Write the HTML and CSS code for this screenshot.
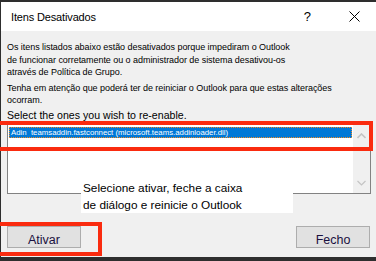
FILE: index.html
```html
<!DOCTYPE html>
<html>
<head>
<meta charset="utf-8">
<link rel="stylesheet" href="styles.css">
</head>
<body>
<div class="window">
  <div class="titlebar">
    <span class="title">Itens Desativados</span>
    <span class="help">?</span>
    <svg class="close" width="11" height="11" viewBox="0 0 11 11"><path d="M0.5 0.5 L10.5 10.5 M10.5 0.5 L0.5 10.5" stroke="#000" stroke-width="1" fill="none"/></svg>
  </div>
  <div class="content">
    <p class="desc">Os itens listados abaixo estão desativados porque impediram o Outlook<br>de funcionar corretamente ou o administrador de sistema desativou-os<br>através de Política de Grupo.</p>
    <p class="desc note">Tenha em atenção que poderá ter de reiniciar o Outlook para que estas alterações<br>ocorram.</p>
    <p class="select">Select the ones you wish to re-enable.</p>
    <div class="listbox">
      <div class="items">
        <div class="item selected">Adin&nbsp; teamsaddin.fastconnect (microsoft.teams.addinloader.dll)</div>
      </div>
      <div class="scrollbar">
        <svg width="9" height="6" viewBox="0 0 9 6"><path d="M0.5 5 L4.5 1 L8.5 5" stroke="#c4c4c4" stroke-width="1.6" fill="none"/></svg>
        <svg width="9" height="6" viewBox="0 0 9 6"><path d="M0.5 1 L4.5 5 L8.5 1" stroke="#c4c4c4" stroke-width="1.2" fill="none"/></svg>
      </div>
    </div>
    <div class="buttons">
      <button class="btn">Ativar</button>
      <button class="btn">Fecho</button>
    </div>
    <div class="callout">Selecione ativar, feche a caixa<br>de diálogo e reinicie o Outlook</div>
    <div class="highlight hl-list"></div>
    <div class="highlight hl-button"></div>
  </div>
</div>
</body>
</html>
```
FILE: styles.css
```css
html, body {
  margin: 0;
  padding: 0;
}
body {
  background: #2e2e2e;
  width: 376px;
  height: 261px;
  overflow: hidden;
}
.window {
  margin: 2px 0 0 1px;
  height: 255px;
  background: #f0f0f0;
  display: flex;
  flex-direction: column;
}
.titlebar {
  height: 29px;
  background: #ffffff;
  display: flex;
  align-items: center;
  font-family: "Liberation Sans", Arial, sans-serif;
  font-size: 11px;
  color: #000;
}
.title {
  margin-left: 10px;
  flex: 1;
  letter-spacing: -0.15px;
}
.help {
  font-size: 13px;
  margin-right: 38px;
}
.close {
  margin-right: 16px;
}
.content {
  position: relative;
  flex: 1;
  padding: 10px 0 0 6px;
  font-family: "Liberation Sans", Arial, sans-serif;
}
.desc {
  margin: 0;
  font-size: 9px;
  line-height: 12.5px;
  color: #000;
  letter-spacing: -0.05px;
}
.note {
  margin-top: 3px;
}
.select {
  margin: 1px 0 0;
  font-size: 10.6px;
  line-height: 14px;
  color: #000;
}
.listbox {
  margin-top: 2px;
  width: 362px;
  height: 68px;
  border: 1px solid #828282;
  background: #fff;
  display: flex;
}
.items {
  flex: 1;
  padding: 2px 1px 0 1px;
}
.item {
  font-size: 7.8px;
  line-height: 11px;
  padding-left: 2px;
  height: 11px;
  white-space: nowrap;
  overflow: hidden;
}
.selected {
  background: #0078d7;
  color: #fff;
  outline: 1px dotted #f08a24;
  outline-offset: -1px;
}
.scrollbar {
  width: 17px;
  background: #f0f0f0;
  display: flex;
  flex-direction: column;
  align-items: center;
  justify-content: space-between;
  padding: 8px 0 7px;
  box-sizing: border-box;
}
.buttons {
  margin-top: 32px;
  display: flex;
  justify-content: space-between;
  width: 363px;
}
.btn {
  width: 74px;
  height: 22px;
  background: #e1e1e1;
  border: 1px solid #adadad;
  font-family: "Liberation Sans", Arial, sans-serif;
  font-size: 12.5px;
  color: #1a1040;
  padding: 6px 0 0;
  margin: 0;
  line-height: 14px;
}
.callout {
  position: absolute;
  left: 80px;
  top: 149px;
  width: 210px;
  height: 33px;
  background: #fff;
  padding: 0 0 0 2px;
  font-size: 11.8px;
  line-height: 16.5px;
  color: #000;
}
.highlight {
  position: absolute;
  border: 4px solid #fa2b0f;
}
.hl-list {
  left: -5px;
  top: 90px;
  width: 369px;
  height: 22px;
}
.hl-button {
  left: -10px;
  top: 191px;
  width: 103px;
  height: 26px;
}
```
